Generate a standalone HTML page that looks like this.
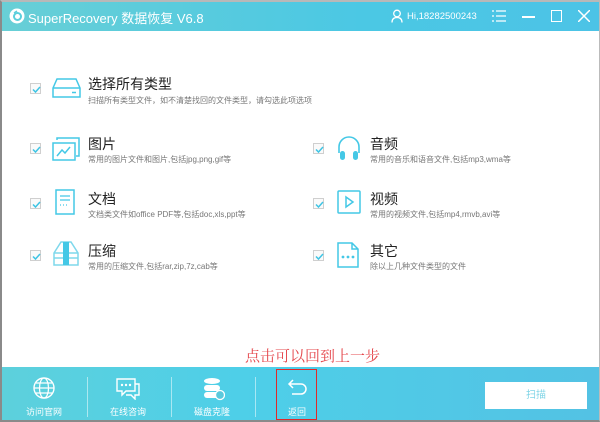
<!DOCTYPE html>
<html><head><meta charset="utf-8"><style>
*{margin:0;padding:0;box-sizing:border-box}
body{width:600px;height:422px;overflow:hidden;background:#fff;font-family:"Liberation Sans","Noto Sans CJK SC",sans-serif;position:relative}
.frame{position:absolute;left:0;top:0;width:600px;height:422px;border-left:2px solid #8a8a8a;border-top:2px solid #b8b8b8;border-bottom:2px solid #8a8a8a;border-right:1px solid #bbb}
.title{position:absolute;left:2px;top:2px;right:1px;height:29px;background:linear-gradient(90deg,#68cfd6,#4bc8e4 60%,#4cc3e6)}
.t{position:absolute;color:#fff;white-space:nowrap}
.abs{position:absolute}
.cb{position:absolute;width:11px;height:11px;border:1px solid #cfcfcf;background:#fafafa}
.cb svg{position:absolute;left:1px;top:1px}
.h{position:absolute;font-size:14px;color:#222;white-space:nowrap}
.d{position:absolute;font-size:8px;color:#777;white-space:nowrap}
.bar{position:absolute;left:2px;right:1px;top:367px;height:53px;background:linear-gradient(90deg,#5dd0dc,#4ecfe8 40%,#53c2e4)}
.lab{position:absolute;top:405px;font-size:9px;color:#fff;width:60px;text-align:center}
.sep{position:absolute;top:377px;width:1px;height:40px;background:rgba(255,255,255,.5)}
</style></head><body>
<div class="title"></div>
<svg class="abs" style="left:9px;top:8px" width="16" height="16" viewBox="0 0 16 16"><circle cx="8" cy="8" r="7.5" fill="#fff"/><circle cx="8.5" cy="8.5" r="3.5" fill="none" stroke="#5ccfdc" stroke-width="2"/><path d="M5 5 L8 3" stroke="#5ccfdc" stroke-width="1.5"/></svg>
<div class="t" style="left:28px;top:8px;font-size:13px">SuperRecovery 数据恢复 V6.8</div>
<svg class="abs" style="left:391px;top:9px" width="12" height="14" viewBox="0 0 12 14"><circle cx="6" cy="4.5" r="3.3" fill="none" stroke="#fff" stroke-width="1.3"/><path d="M1 13.5 Q1 8.5 6 8.5 Q11 8.5 11 13.5" fill="none" stroke="#fff" stroke-width="1.3"/></svg>
<div class="t" style="left:407px;top:11px;font-size:9.5px">Hi,18282500243</div>
<svg class="abs" style="left:492px;top:10px" width="14" height="12"><path d="M0 1h2M4 1h10M0 6h2M4 6h10M0 11h2M4 11h10" stroke="#fff" stroke-width="1.3"/></svg>
<div class="abs" style="left:522px;top:16px;width:13px;height:2px;background:#fff"></div>
<div class="abs" style="left:551px;top:10px;width:11px;height:12px;border:1.5px solid #fff"></div>
<svg class="abs" style="left:578px;top:10px" width="12" height="12"><path d="M0 0L12 12M12 0L0 12" stroke="#fff" stroke-width="1.5"/></svg>

<!-- rows -->
<div class="cb" style="left:30px;top:83px"><svg width="9" height="9"><path d="M1 4.5L3.5 7L8 2" fill="none" stroke="#3ec4e4" stroke-width="1.5"/></svg></div>
<svg class="abs" style="left:52px;top:78px" width="29" height="20" viewBox="0 0 29 20"><path d="M5 1H24L28 10V19H1V10Z M1 10H28 M20 14.5h4" fill="none" stroke="#44c8e6" stroke-width="1.5"/></svg>
<div class="h" style="left:88px;top:74px">选择所有类型</div>
<div class="d" style="left:88px;top:95px">扫描所有类型文件，如不清楚找回的文件类型，请勾选此项选项</div>

<div class="cb" style="left:30px;top:143px"><svg width="9" height="9"><path d="M1 4.5L3.5 7L8 2" fill="none" stroke="#3ec4e4" stroke-width="1.5"/></svg></div>
<svg class="abs" style="left:52px;top:137px" width="28" height="24"><path d="M5 3V1H27V19H24" fill="none" stroke="#44c8e6" stroke-width="1.5"/><rect x="1" y="6" width="22" height="17" fill="none" stroke="#44c8e6" stroke-width="1.5"/><path d="M5 19L10 13L13 16L18 10" fill="none" stroke="#44c8e6" stroke-width="1.5"/></svg>
<div class="h" style="left:88px;top:134px">图片</div>
<div class="d" style="left:88px;top:154px">常用的图片文件和图片,包括jpg,png,gif等</div>

<div class="cb" style="left:313px;top:143px"><svg width="9" height="9"><path d="M1 4.5L3.5 7L8 2" fill="none" stroke="#3ec4e4" stroke-width="1.5"/></svg></div>
<svg class="abs" style="left:337px;top:135px" width="24" height="26"><path d="M2 18V12A10 10 0 0 1 22 12V18" fill="none" stroke="#44c8e6" stroke-width="1.6"/><rect x="3" y="16" width="5" height="9" rx="2.5" fill="#44c8e6"/><rect x="16" y="16" width="5" height="9" rx="2.5" fill="#44c8e6"/></svg>
<div class="h" style="left:370px;top:134px">音频</div>
<div class="d" style="left:370px;top:154px">常用的音乐和语音文件,包括mp3,wma等</div>

<div class="cb" style="left:30px;top:198px"><svg width="9" height="9"><path d="M1 4.5L3.5 7L8 2" fill="none" stroke="#3ec4e4" stroke-width="1.5"/></svg></div>
<svg class="abs" style="left:55px;top:189px" width="20" height="26"><rect x="1" y="1" width="18" height="24" fill="none" stroke="#44c8e6" stroke-width="1.5"/><path d="M5 7h10M5 11h10M5 16h1M8 16h1M11 16h1" stroke="#44c8e6" stroke-width="1.3"/></svg>
<div class="h" style="left:88px;top:189px">文档</div>
<div class="d" style="left:88px;top:209px">文档类文件如office PDF等,包括doc,xls,ppt等</div>

<div class="cb" style="left:313px;top:198px"><svg width="9" height="9"><path d="M1 4.5L3.5 7L8 2" fill="none" stroke="#3ec4e4" stroke-width="1.5"/></svg></div>
<svg class="abs" style="left:337px;top:190px" width="24" height="24"><rect x="1" y="1" width="22" height="22" rx="1" fill="none" stroke="#44c8e6" stroke-width="1.5"/><path d="M9 7L16 12L9 17Z" fill="none" stroke="#44c8e6" stroke-width="1.5"/></svg>
<div class="h" style="left:370px;top:189px">视频</div>
<div class="d" style="left:370px;top:209px">常用的视频文件,包括mp4,rmvb,avi等</div>

<div class="cb" style="left:30px;top:250px"><svg width="9" height="9"><path d="M1 4.5L3.5 7L8 2" fill="none" stroke="#3ec4e4" stroke-width="1.5"/></svg></div>
<svg class="abs" style="left:53px;top:241px" width="26" height="25"><path d="M1 12L8 1H18L25 12V24H1Z M1 12H25 M1 17H25" fill="none" stroke="#7ed8ec" stroke-width="1.5"/><rect x="10" y="1" width="6" height="23" fill="#44c8e6"/></svg>
<div class="h" style="left:88px;top:241px">压缩</div>
<div class="d" style="left:88px;top:261px">常用的压缩文件,包括rar,zip,7z,cab等</div>

<div class="cb" style="left:313px;top:250px"><svg width="9" height="9"><path d="M1 4.5L3.5 7L8 2" fill="none" stroke="#3ec4e4" stroke-width="1.5"/></svg></div>
<svg class="abs" style="left:337px;top:242px" width="22" height="26"><path d="M1 1H15L21 7V25H1Z M15 1V7H21" fill="none" stroke="#44c8e6" stroke-width="1.5"/><circle cx="6" cy="15" r="1.4" fill="#44c8e6"/><circle cx="11" cy="15" r="1.4" fill="#44c8e6"/><circle cx="16" cy="15" r="1.4" fill="#44c8e6"/></svg>
<div class="h" style="left:370px;top:241px">其它</div>
<div class="d" style="left:370px;top:261px">除以上几种文件类型的文件</div>

<div class="abs" style="left:245px;top:345px;font-size:15px;color:#e5484d;white-space:nowrap;font-family:'Noto Serif CJK SC',serif">点击可以回到上一步</div>

<div class="bar"></div>
<svg class="abs" style="left:33px;top:377px" width="22" height="22"><circle cx="11" cy="11" r="10" fill="none" stroke="#fff" stroke-width="1.4"/><ellipse cx="11" cy="11" rx="4.5" ry="10" fill="none" stroke="#fff" stroke-width="1.2"/><path d="M1 11H21M3 6H19M3 16H19" stroke="#fff" stroke-width="1.2"/></svg>
<svg class="abs" style="left:116px;top:378px" width="24" height="22"><path d="M1 1H19V13H10L6 17V13H1Z" fill="none" stroke="#fff" stroke-width="1.4"/><path d="M19 6H23V17H19V21L15 17H10" fill="none" stroke="#fff" stroke-width="1.4"/><circle cx="6" cy="7" r="1.2" fill="#fff"/><circle cx="10" cy="7" r="1.2" fill="#fff"/><circle cx="14" cy="7" r="1.2" fill="#fff"/></svg>
<svg class="abs" style="left:203px;top:377px" width="22" height="24"><ellipse cx="9" cy="4" rx="8" ry="3" fill="#fff"/><rect x="1" y="8" width="16" height="6" rx="3" fill="#fff"/><rect x="1" y="15" width="16" height="6" rx="3" fill="#fff"/><circle cx="17" cy="18" r="4.5" fill="#5bc9dc" stroke="#fff" stroke-width="1.3"/></svg>
<svg class="abs" style="left:287px;top:379px" width="20" height="16"><path d="M6 1L2 5L6 9M2 5H14A5 5 0 0 1 14 15H5" fill="none" stroke="#fff" stroke-width="1.5"/></svg>
<div class="lab" style="left:14px">访问官网</div>
<div class="lab" style="left:98px">在线咨询</div>
<div class="lab" style="left:182px">磁盘克隆</div>
<div class="lab" style="left:267px">返回</div>
<div class="sep" style="left:87px"></div>
<div class="sep" style="left:171px"></div>
<div class="sep" style="left:255px"></div>
<div class="abs" style="left:276px;top:369px;width:41px;height:51px;border:1.5px solid #e02a2a"></div>
<div class="abs" style="left:485px;top:382px;width:102px;height:27px;background:#fff;color:#7fd4e6;font-size:10px;text-align:center;line-height:27px">扫描</div>
<div class="frame"></div>
</body></html>
